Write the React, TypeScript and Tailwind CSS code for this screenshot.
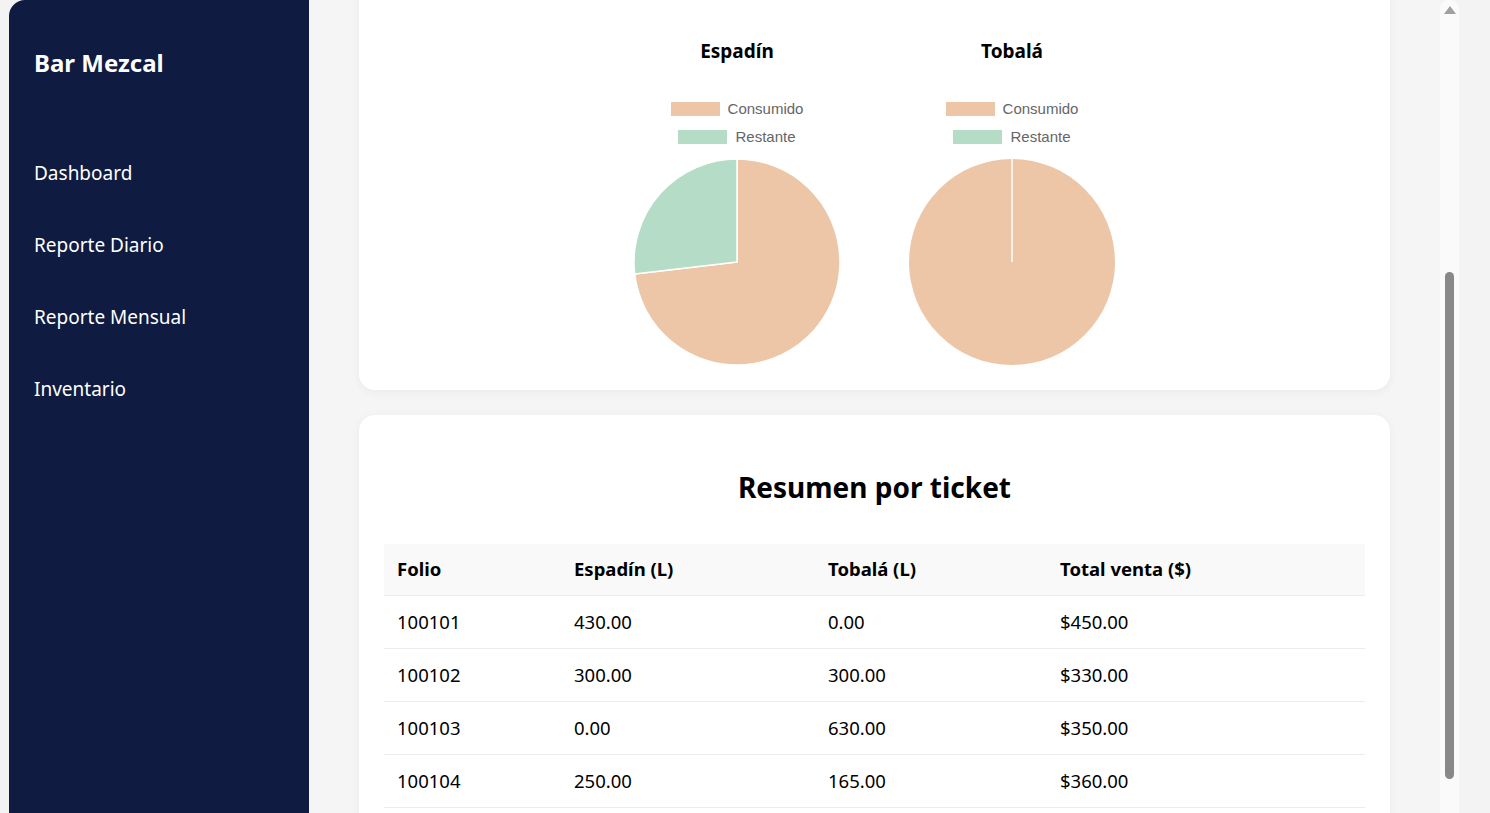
import { useLayoutEffect, useRef } from 'react';

const nav = ['Dashboard', 'Reporte Diario', 'Reporte Mensual', 'Inventario'];

const rows = [
  ['100101', '430.00', '0.00', '$450.00'],
  ['100102', '300.00', '300.00', '$330.00'],
  ['100103', '0.00', '630.00', '$350.00'],
  ['100104', '250.00', '165.00', '$360.00'],
  ['100105', '120.00', '90.00', '$240.00'],
  ['100106', '80.00', '0.00', '$120.00'],
];

const PEACH = '#edc6a7';
const MINT = '#b4dcc6';

function Pie({ consumed }: { consumed: number }) {
  const r = 103;
  const c = 103;
  if (consumed >= 1) {
    return (
      <svg className="block" width="208" height="208" viewBox="-1 -1 208 208">
        <circle cx={c} cy={c} r={r} fill={PEACH} />
        <line x1={c} y1={c} x2={c} y2={0} stroke="#fff" strokeWidth="1.5" />
      </svg>
    );
  }
  const a = consumed * Math.PI * 2;
  const x = c + r * Math.sin(a);
  const y = c - r * Math.cos(a);
  const large = consumed > 0.5 ? 1 : 0;
  return (
    <svg className="block" width="208" height="208" viewBox="-1 -1 208 208">
      <path d={`M${c} ${c} L${c} ${c - r} A${r} ${r} 0 ${large} 1 ${x} ${y} Z`} fill={PEACH} stroke="#fff" strokeWidth="1.5" strokeLinejoin="round" />
      <path d={`M${c} ${c} L${x} ${y} A${r} ${r} 0 ${1 - large} 1 ${c} ${c - r} Z`} fill={MINT} stroke="#fff" strokeWidth="1.5" strokeLinejoin="round" />
    </svg>
  );
}

function LegendRow({ color, label }: { color: string; label: string }) {
  return (
    <div className="flex h-[28px] items-center gap-[8px]">
      <span className="h-[14px] w-[49px]" style={{ backgroundColor: color }} />
      <span className="text-[15px] text-[#666]" style={{ fontFamily: '"Liberation Sans", Arial, sans-serif' }}>
        {label}
      </span>
    </div>
  );
}

function ChartBlock({ title, consumed }: { title: string; consumed: number }) {
  return (
    <div className="flex w-[250px] flex-col items-center">
      <h3 className="text-[19px] font-bold leading-[24px] text-black">{title}</h3>
      <div className="mt-[32px] flex flex-col items-center">
        <LegendRow color={PEACH} label="Consumido" />
        <LegendRow color={MINT} label="Restante" />
      </div>
      <div className="mt-[7px]">
        <Pie consumed={consumed} />
      </div>
    </div>
  );
}

export default function App() {
  const scroller = useRef<HTMLDivElement>(null);
  const charts = useRef<HTMLDivElement>(null);

  useLayoutEffect(() => {
    if (scroller.current && charts.current) {
      scroller.current.scrollTop = charts.current.offsetTop - 39;
    }
  }, []);

  return (
    <div
      className="flex h-[813px] w-full overflow-hidden bg-[#f3f3f3] pl-[9px]"
      style={{ fontFamily: '"Noto Sans", "Open Sans", sans-serif' }}
    >
      <aside className="flex w-[300px] shrink-0 flex-col rounded-tl-[16px] bg-[#0f1b40] px-[25px] pt-[45px] text-white">
        <div className="text-[24px] font-bold leading-[36px]">Bar Mezcal</div>
        <nav className="mt-[56px] flex flex-col">
          {nav.map((n) => (
            <a key={n} className="block py-[22px] text-[19px] leading-[28px]">
              {n}
            </a>
          ))}
        </nav>
      </aside>

      <main
        ref={scroller}
        className="relative flex h-full flex-1 flex-col gap-[25px] overflow-y-scroll bg-[#f5f5f5] px-[50px] py-[25px] [scrollbar-width:none]"
      >
        <section className="shrink-0 rounded-2xl bg-white p-[25px] shadow-[0_2px_10px_rgba(0,0,0,0.05)]">
          <h1 className="text-[28px] font-bold">Reporte Diario</h1>
          <p className="mt-2 text-[18px] text-gray-600">Consumo y ventas del día</p>
        </section>

        <section className="shrink-0 rounded-2xl bg-white px-[25px] pb-[24px] pt-[25px] shadow-[0_2px_10px_rgba(0,0,0,0.05)]">
          <h2 className="text-center text-[26px] font-bold">Consumo por botella</h2>
          <div ref={charts} className="mt-[40px] flex justify-center gap-[25px]">
            <ChartBlock title="Espadín" consumed={0.7315} />
            <ChartBlock title="Tobalá" consumed={1} />
          </div>
        </section>

        <section className="shrink-0 rounded-2xl bg-white px-[25px] pb-[25px] pt-[25px] shadow-[0_2px_10px_rgba(0,0,0,0.05)]">
          <h2 className="mb-[37px] mt-[27px] text-center text-[28px] font-bold leading-[40px] text-black">Resumen por ticket</h2>
          <table className="w-full border-collapse text-left text-[18.5px] text-black">
            <thead>
              <tr className="h-[51px] border-b border-[#ececec] bg-[#f9f9f9]">
                <th className="w-[177px] px-[13px] font-bold">Folio</th>
                <th className="w-[254px] px-[13px] font-bold">Espadín (L)</th>
                <th className="w-[232px] px-[13px] font-bold">Tobalá (L)</th>
                <th className="px-[13px] font-bold">Total venta ($)</th>
              </tr>
            </thead>
            <tbody>
              {rows.map((r) => (
                <tr key={r[0]} className="h-[53px] border-b border-[#ececec]">
                  {r.map((c, i) => (
                    <td key={i} className="px-[13px] pt-[1px]">
                      {c}
                    </td>
                  ))}
                </tr>
              ))}
            </tbody>
          </table>
        </section>
      </main>

      <div className="flex w-[19px] shrink-0 flex-col items-center rounded-t-[8px] bg-[#fafafa]">
        <div className="mt-[6px] h-0 w-0 border-x-[6px] border-b-[8px] border-x-transparent border-b-[#a0a0a0]" />
        <div className="mt-[258px] h-[507px] w-[9px] rounded-full bg-[#888]" />
      </div>
      <div className="w-[31px] shrink-0 bg-[#f3f3f3]" />
    </div>
  );
}
